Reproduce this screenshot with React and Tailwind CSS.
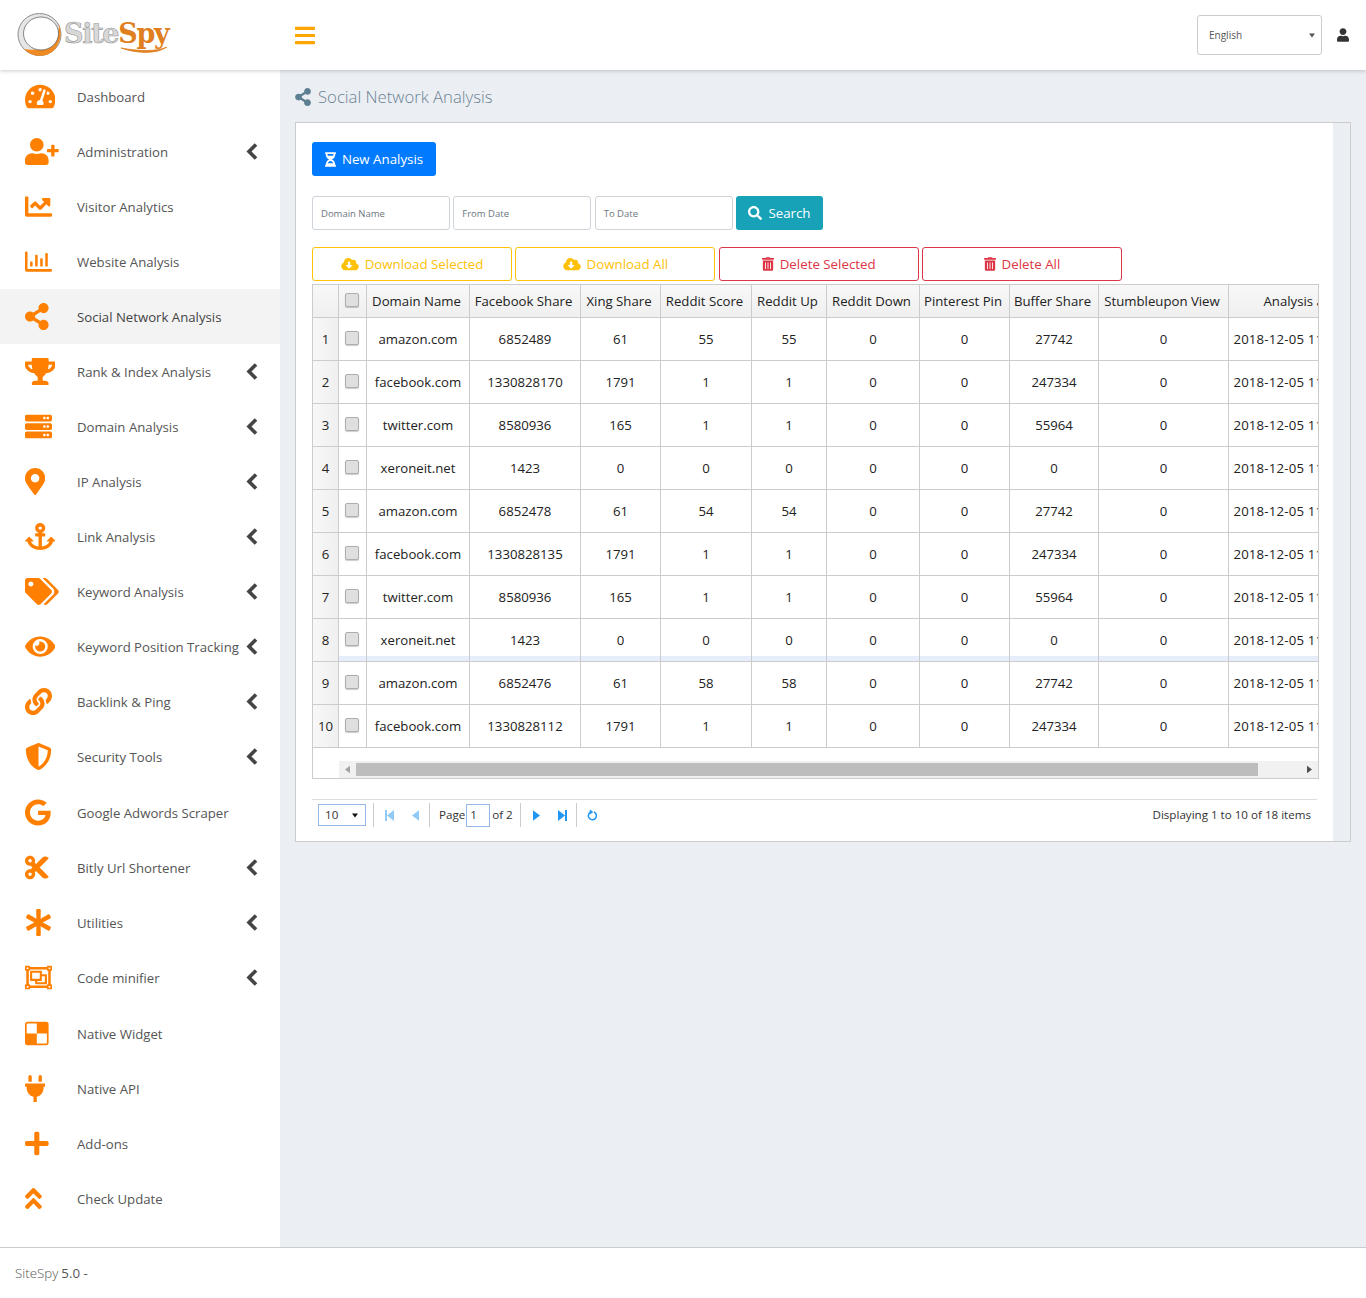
import {
  FaTachometerAlt, FaUserPlus, FaChartLine, FaRegChartBar, FaShareAlt, FaTrophy, FaServer,
  FaMapMarkerAlt, FaAnchor, FaTags, FaEye, FaLink, FaShieldAlt, FaGoogle, FaCut, FaAsterisk,
  FaRegObjectGroup, FaDelicious, FaPlug, FaPlus, FaAngleDoubleUp, FaBars,
  FaUser, FaHourglassHalf, FaSearch, FaCloudDownloadAlt, FaTrashAlt,
} from "react-icons/fa";

// w is the icon's width at 27px high, from its viewBox
const menu = [
  { label: "Dashboard", icon: FaTachometerAlt, w: 30.4 },
  { label: "Administration", icon: FaUserPlus, w: 33.75, arrow: true },
  { label: "Visitor Analytics", icon: FaChartLine, w: 27 },
  { label: "Website Analysis", icon: FaRegChartBar, w: 27 },
  { label: "Social Network Analysis", icon: FaShareAlt, w: 23.6, active: true },
  { label: "Rank & Index Analysis", icon: FaTrophy, w: 30.4, arrow: true },
  { label: "Domain Analysis", icon: FaServer, w: 27, arrow: true },
  { label: "IP Analysis", icon: FaMapMarkerAlt, w: 20.25, arrow: true },
  { label: "Link Analysis", icon: FaAnchor, w: 30.4, arrow: true },
  { label: "Keyword Analysis", icon: FaTags, w: 33.75, arrow: true },
  { label: "Keyword Position Tracking", icon: FaEye, w: 30.4, arrow: true },
  { label: "Backlink & Ping", icon: FaLink, w: 27, arrow: true },
  { label: "Security Tools", icon: FaShieldAlt, w: 27, arrow: true },
  { label: "Google Adwords Scraper", icon: FaGoogle, w: 25.7, nudge: true },
  { label: "Bitly Url Shortener", icon: FaCut, w: 23.6, arrow: true },
  { label: "Utilities", icon: FaAsterisk, w: 27, arrow: true },
  { label: "Code minifier", icon: FaRegObjectGroup, w: 27, arrow: true },
  { label: "Native Widget", icon: FaDelicious, w: 23.6, nudge: true },
  { label: "Native API", icon: FaPlug, w: 20.25 },
  { label: "Add-ons", icon: FaPlus, w: 23.6 },
  { label: "Check Update", icon: FaAngleDoubleUp, w: 16.9 },
];

const columns = [
  { title: "Domain Name", key: "domain", width: 103 },
  { title: "Facebook Share", key: "facebook", width: 111 },
  { title: "Xing Share", key: "xing", width: 80 },
  { title: "Reddit Score", key: "score", width: 91 },
  { title: "Reddit Up", key: "up", width: 75 },
  { title: "Reddit Down", key: "down", width: 93 },
  { title: "Pinterest Pin", key: "pin", width: 90 },
  { title: "Buffer Share", key: "buffer", width: 89 },
  { title: "Stumbleupon View", key: "stumble", width: 130 },
  { title: "Analysis at", key: "date", width: 138 },
];

const row = (domain, facebook, xing, score, buffer) => ({
  domain, facebook, xing, score, up: score, down: 0, pin: 0, buffer, stumble: 0, date: "2018-12-05 11:20:14",
});

const rows = [
  row("amazon.com", 6852489, 61, 55, 27742),
  row("facebook.com", 1330828170, 1791, 1, 247334),
  row("twitter.com", 8580936, 165, 1, 55964),
  row("xeroneit.net", 1423, 0, 0, 0),
  row("amazon.com", 6852478, 61, 54, 27742),
  row("facebook.com", 1330828135, 1791, 1, 247334),
  row("twitter.com", 8580936, 165, 1, 55964),
  row("xeroneit.net", 1423, 0, 0, 0),
  row("amazon.com", 6852476, 61, 58, 27742),
  row("facebook.com", 1330828112, 1791, 1, 247334),
];

function Check() {
  return <span className="block w-[14px] h-[14px] ml-[6px] -mt-[2px] rounded-[2px] border border-[#adadad] bg-[#dfdfdf] shadow-[0_1px_1px_rgba(0,0,0,0.2)]" />;
}

function Triangle({ dir, className }) {
  const d = dir === "left" ? "M8 0V12L0 6Z" : dir === "right" ? "M0 0V12L8 6Z" : "M0 0H10L5 7Z";
  const box = dir === "down" ? "0 0 10 7" : "0 0 8 12";
  return (
    <svg viewBox={box} className={className}>
      <path d={d} fill="currentColor" />
    </svg>
  );
}

function StepIcon({ dir, className }) {
  return (
    <svg viewBox="0 0 9 11" className={className}>
      {dir === "left"
        ? <path d="M0 0H2V11H0ZM9 0V11L2 5.5Z" fill="currentColor" />
        : <path d="M7 0H9V11H7ZM0 0V11L7 5.5Z" fill="currentColor" />}
    </svg>
  );
}

function Logo() {
  return (
    <div className="flex items-center w-[160px]">
      <svg width="46" height="44" viewBox="0 0 46 44" className="shrink-0">
        <ellipse cx="22.5" cy="21.5" rx="21.5" ry="21" fill="#e6e6e6" stroke="#8c8c8c" strokeWidth="1" />
        <path d="M7 36 C16 46 34 45 40 33 C44 26 45 19 42 12 C42 26 30 40 7 36Z" fill="#ef8b22" />
        <ellipse cx="24" cy="20.5" rx="17.5" ry="16.5" fill="#fff" stroke="#555" strokeWidth="0.7" />
      </svg>
      <div className="ml-[1px] relative font-['DejaVu_Serif',serif] text-[27px] leading-none font-bold tracking-[-1.3px] pb-[3px]">
        <span className="text-[#d8d8d8] [-webkit-text-stroke:0.6px_#999]">Site</span>
        <span className="text-[#e07f1f]">Spy</span>
        <svg width="48" height="7" viewBox="0 0 48 7" className="absolute left-[57px] top-[27px]">
          <path d="M0 1 C14 6 34 8 46 0 C36 5 16 4 0 1Z" fill="#e07f1f" stroke="#e07f1f" strokeWidth="0.8" />
        </svg>
      </div>
    </div>
  );
}

function Sidebar() {
  return (
    <aside className="w-[280px] shrink-0 bg-white pb-[18px] -mt-[1px]">
      {menu.map((item) => (
        <div key={item.label} className={`flex items-center h-[55px] pl-[25px] ${item.active ? "bg-[#f3f3f3]" : ""} ${item.nudge ? "mt-[1px]" : ""}`}>
          <span className="w-[52px] flex items-center shrink-0">
            <item.icon style={{ height: 27, width: item.w }} className="text-[#ff8000]" />
          </span>
          <span className={`text-[13.2px] whitespace-nowrap pt-[3px] ${item.active ? "text-[#444]" : "text-[#555]"}`}>{item.label}</span>
          {item.arrow && (
            <svg viewBox="0 0 12 17" className="ml-auto mr-[22px] w-[12px] h-[17px] shrink-0">
              <path d="M10 1.5L3 8.5L10 15.5" fill="none" stroke="#444" strokeWidth="3.6" />
            </svg>
          )}
        </div>
      ))}
    </aside>
  );
}

function OutlineButton({ icon: Icon, label, tone }) {
  const tones = tone === "warn" ? "border-[#ffc107] text-[#ffc107]" : "border-[#dc3545] text-[#dc3545]";
  return (
    <button className={`w-[200px] h-[34px] border rounded-[3px] bg-white text-[13.3px] flex items-center justify-center gap-[6px] ${tones}`}>
      {tone === "warn" ? <Icon className="w-[18px] h-[14px]" /> : <Icon className="w-[12px] h-[14px]" />}
      <span className="pt-[2px]">{label}</span>
    </button>
  );
}

function Field({ label }) {
  return (
    <div className="w-[138px] h-[34px] border border-[#ced4da] rounded-[3px] pl-[8px] pt-[3px] flex items-center text-[9.5px] text-[#6c757d] bg-white">
      {label}
    </div>
  );
}

function Grid() {
  return (
    <div className="w-[1007px] h-[495px] border border-[#ccc] overflow-hidden bg-white">
      <table className="table-fixed border-separate border-spacing-0 w-[1054px] text-[13.2px] text-[#222]">
        <colgroup>
          <col className="w-[26px]" />
          <col className="w-[28px]" />
          {columns.map((c) => <col key={c.key} style={{ width: c.width }} />)}
        </colgroup>
        <thead>
          <tr className="h-[33px] bg-gradient-to-b from-[#f8f8f8] to-[#efefef]">
            <th className="border-r border-b border-[#ccc]" />
            <th className="border-r border-b border-[#ccc]"><Check /></th>
            {columns.map((c) => (
              <th key={c.key} className="border-r border-b border-[#ccc] font-normal whitespace-nowrap text-center pr-[3px] pt-[2px]">{c.title}</th>
            ))}
          </tr>
        </thead>
        <tbody>
          {rows.map((r, i) => (
            <tr key={i} className="h-[43px]">
              <td className="border-r border-b border-[#ccc] text-center bg-gradient-to-r from-[#f8f8f8] to-[#efefef] pt-[2px]">{i + 1}</td>
              <td className={`border-r border-b border-[#ccc] ${i === 7 ? "shadow-[inset_0_-5px_0_#e6eefb]" : ""}`}><Check /></td>
              {columns.map((c) => (
                <td key={c.key} className={`border-r border-b border-[#ccc] text-center whitespace-nowrap overflow-hidden pt-[2px] ${c.key === "date" ? "tracking-[0.2px]" : ""} ${i === 7 ? "shadow-[inset_0_-5px_0_#e6eefb]" : ""}`}>{r[c.key]}</td>
              ))}
            </tr>
          ))}
        </tbody>
      </table>
      <div className="mt-[13px] ml-[26px] h-[17px] bg-[#f1f1f1] flex items-center">
        <span className="w-[17px] flex justify-center shrink-0"><Triangle dir="left" className="w-[5px] h-[9px] text-[#a3a3a3]" /></span>
        <div className="w-[902px] h-[13px] bg-[#bdbdbd]" />
        <span className="ml-auto w-[17px] flex justify-center shrink-0"><Triangle dir="right" className="w-[5px] h-[9px] text-[#505050]" /></span>
      </div>
    </div>
  );
}

function Pager() {
  return (
    <div className="w-[1005px] mt-[20px] border-t border-[#ddd] flex items-center h-[31px] pl-[6px] pr-[6px] text-[11.6px] text-[#333]">
      <div className="w-[48px] h-[22px] border border-[#95b8e7] flex items-center justify-between pl-[6px] pr-[7px]">
        10
        <Triangle dir="down" className="w-[6px] h-[5px] text-[#111]" />
      </div>
      <span className="w-px h-[24px] bg-[#ccc] ml-[7px]" />
      <StepIcon dir="left" className="ml-[11px] w-[9px] h-[11px] text-[#90caf9]" />
      <Triangle dir="left" className="ml-[18px] w-[7px] h-[11px] text-[#90caf9]" />
      <span className="w-px h-[24px] bg-[#ccc] ml-[10px]" />
      <span className="ml-[9px]">Page</span>
      <span className="ml-[1px] w-[24px] h-[23px] border border-[#95b8e7] pl-[3px] flex items-center">1</span>
      <span className="ml-[2px]">of 2</span>
      <span className="w-px h-[24px] bg-[#ccc] ml-[7px]" />
      <Triangle dir="right" className="ml-[12px] w-[7px] h-[11px] text-[#2196f3]" />
      <StepIcon dir="right" className="ml-[18px] w-[9px] h-[11px] text-[#2196f3]" />
      <span className="w-px h-[24px] bg-[#ccc] ml-[9px]" />
      <svg viewBox="0 0 12 13" className="ml-[10px] w-[11px] h-[12px] text-[#2196f3]">
        <path d="M7.6 3.2A4.4 4.4 0 1 1 3.4 3.6" fill="none" stroke="currentColor" strokeWidth="1.7" />
        <path d="M3 0.4L7 3.2L3 6Z" fill="currentColor" />
      </svg>
      <span className="ml-auto">Displaying 1 to 10 of 18 items</span>
    </div>
  );
}

export default function App() {
  return (
    <div className="w-[1366px] min-h-[1298px] flex flex-col bg-[#ebeef3] font-['Open_Sans','Noto_Sans',sans-serif]">
      <header className="h-[70px] bg-white shadow-[0_1px_4px_rgba(0,0,0,0.2)] flex items-center pl-[17px] pr-[17px] relative z-10">
        <Logo />
        <FaBars className="ml-[118px] w-[20px] h-[23px] text-[#ffa500]" />
        <div className="ml-auto w-[125px] h-[40px] border border-[#ccc] rounded-[3px] flex items-center justify-between pl-[11px] pr-[6px] text-[10px] text-[#555]">
          English
          <Triangle dir="down" className="w-[6px] h-[5px] text-[#555]" />
        </div>
        <FaUser className="ml-[15px] h-[14px] w-[12px] text-[#333]" />
      </header>
      <div className="flex flex-1">
        <Sidebar />
        <main className="flex-1 pl-[15px] pr-[15px]">
          <div className="h-[52px] flex items-center gap-[7px] text-[16.7px] text-[#6c8494] font-light pt-[2px]">
            <FaShareAlt className="h-[18px] w-[16px] text-[#5e7f91]" />
            Social Network Analysis
          </div>
          <section className="w-[1056px] h-[720px] border border-[#ccc] bg-[#ebeef3]">
            <div className="w-[1037px] h-full bg-white pl-[16px] pt-[19px]">
              <button className="w-[124px] h-[34px] rounded-[3px] bg-[#007bff] text-white text-[13.3px] flex items-center justify-center gap-[6px]">
                <FaHourglassHalf className="h-[15px] w-[11px]" />
                <span className="pt-[2px]">New Analysis</span>
              </button>
              <div className="flex gap-[3.33px] mt-[20px]">
                <Field label="Domain Name" />
                <Field label="From Date" />
                <Field label="To Date" />
                <button className="w-[87px] h-[34px] rounded-[3px] bg-[#17a2b8] text-white text-[13.3px] flex items-center justify-center gap-[6px]">
                  <FaSearch className="w-[14px] h-[14px]" />
                  <span className="pt-[2px]">Search</span>
                </button>
              </div>
              <div className="flex gap-[3.33px] mt-[17px] mb-[3px]">
                <OutlineButton icon={FaCloudDownloadAlt} label="Download Selected" tone="warn" />
                <OutlineButton icon={FaCloudDownloadAlt} label="Download All" tone="warn" />
                <OutlineButton icon={FaTrashAlt} label="Delete Selected" tone="danger" />
                <OutlineButton icon={FaTrashAlt} label="Delete All" tone="danger" />
              </div>
              <Grid />
              <Pager />
            </div>
          </section>
        </main>
      </div>
      <footer className="h-[51px] bg-white border-t border-[#ccc] flex items-center pl-[15px] pt-[1px] text-[13.3px] text-[#555]">
        <span className="font-light">SiteSpy</span>
        <span className="ml-[3px]">5.0 -</span>
      </footer>
    </div>
  );
}
